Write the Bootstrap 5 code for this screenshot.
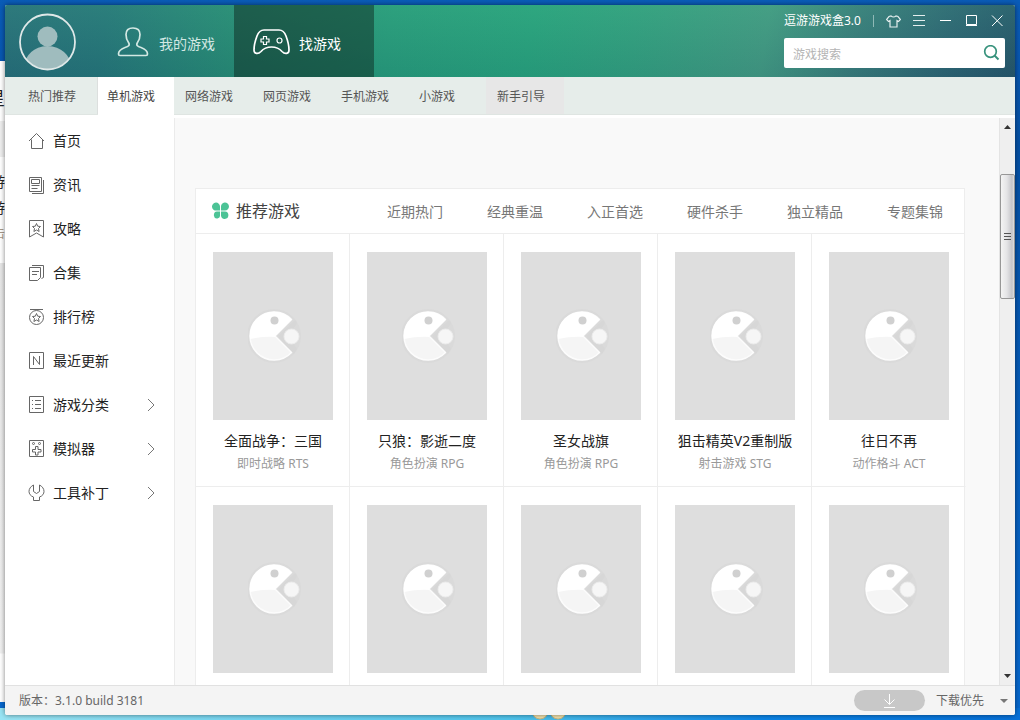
<!DOCTYPE html>
<html lang="zh-CN">
<head>
<meta charset="utf-8">
<meta name="viewport" content="width=device-width, initial-scale=1">
<title>逗游游戏盒3.0</title>
<link href="https://cdn.jsdelivr.net/npm/bootstrap@5.3.0/dist/css/bootstrap.min.css" rel="stylesheet">
<script src="https://cdn.jsdelivr.net/npm/bootstrap@5.3.0/dist/js/bootstrap.bundle.min.js"></script>
<style>
body{font-family:"Noto Sans","Noto Sans CJK SC",sans-serif;font-size:12px;line-height:18px;color:#555;
  background:linear-gradient(90deg,#98e4f4 0,#4fc4ec 50%,#0b84e6 75%,#0670d8 100%) bottom/100% 12px no-repeat,linear-gradient(180deg,#0a5cb8 0,#0550a4 20%,#0668cf 100%)}
a{color:inherit;text-decoration:none}
button{border:0;background:none;padding:0;color:inherit}
svg{display:block;flex:none}
.desk{height:100vh;padding:5px 5px 5px 0}
.behind{width:5px;flex:none;margin-top:56px;margin-bottom:13px;direction:rtl;color:#222;font-size:14px;white-space:nowrap;
  background:linear-gradient(#fff 0,#fff 60px,#eee 60px,#eee 96px,#fff 96px,#fff 202px,#e6e6e6 202px,#f0f0f0 592px,#fff 593px)}
.behind p{margin:0;height:26px}
.behind p:first-child{height:88px;padding-top:28px;font-size:18px}
.behind p:last-child{color:#a98;font-size:12px}
.flower{position:absolute;left:530px;bottom:-4px}
.app{background:#fff;box-shadow:0 0 5px rgba(0,0,0,.5);border-radius:2px;position:relative}
.topbar{height:72px;color:#fff;
  background:linear-gradient(180deg,rgba(70,180,130,.16),rgba(0,60,70,.12)),linear-gradient(98deg,#296e7b 0,#27757b 10%,#298c77 23%,#299d7d 38%,#2aa47f 52%,#34a181 62%,#459b85 75%,#3b7c7d 84%,#2f6475 93%,#28556c 100%)}
.avatar{margin:8px 18px 0 14px}
.maintab{width:140px;padding:2px 0 0 19px;gap:9px;font-size:14px;color:#d3e8e3}
.maintab.active{background:rgba(10,30,25,.45);color:#fff}
.tools{width:231px;padding:5px 5px 0 0}
.tools button{width:26px;height:22px}
.rule{width:1px;height:12px;background:#8fb9b6;margin-right:6px}
.search{height:30px;background:#fff;border-radius:2px;margin:6px 5px 0 0;padding:0 5px 0 9px}
.search input{border:0;outline:0;background:none;min-width:0;color:#555}
.search input::placeholder{color:#b4b4b4}
.subtabs{height:38px;background:#e6edea;border-bottom:1px solid #dfe5e2;margin-bottom:3px}
.subtabs a{width:78px;padding:2px 0 0 11px}
.subtabs a.first{width:93px;padding-left:23px;border-right:1px solid #dcdfde}
.subtabs a.active{width:76px;padding-left:9px;background:#fff;margin-bottom:-1px;color:#444}
.subtabs a.guide{background:#e7e7e7}
.sidebar{width:170px;border-right:1px solid #ebebeb;padding-top:1px;flex:none}
.sidebar a{height:44px;padding:0 19px 0 23px;font-size:14px;color:#222;gap:8px}
.sidebar svg{color:#666}
.content-area{background:#f9f9f9;padding:70px 34px 0 20px}
.panel{background:#fff;border:1px solid #ededed}
.panel-head{height:45px;border-bottom:1px solid #ededed;padding-left:16px}
.panel-head h2{font-size:16px;line-height:24px;color:#444;gap:7px;font-weight:400}
.panel-head nav{padding-top:2px;margin-right:-1px}
.panel-head nav a{width:100px;font-size:14px;color:#777}
.games{display:grid;grid-template-columns:repeat(5,1fr);margin-right:-2px}
.game{border-right:1px solid #ededed;border-bottom:1px solid #ededed;padding:18px 0 0 1px;height:253px}
.game:nth-child(5n){border-right-color:transparent}
.cover{width:120px;height:168px;background:#dedede;padding-left:6px}
.game h3{font-size:14px;line-height:22px;margin:10px 0 0;color:#222;font-weight:400;white-space:nowrap}
.game p{margin:3px 0 0;color:#999}
.scroller{width:16px;background:#efefef;border-left:1px solid #e4e4e4;padding:6px 0}
.track{padding-top:45px}
.thumb{height:125px;width:15px;border:1px solid #979797;border-radius:2px;background:linear-gradient(90deg,#f4f4f4,#e4e4e6 45%,#c4c4c8 85%,#e0e0e0)}
.statusbar{height:30px;background:#f4f4f4;border-top:1px solid #e1e1e1;padding:0 7px 0 14px;color:#666;border-radius:0 0 2px 2px}
.dl{width:71px;height:21px;border-radius:11px;background:#c8c8c8;margin-right:11px}
</style>
</head>
<body>
<svg width="0" height="0" class="position-absolute">
  <symbol id="pac" viewBox="0 0 56 56">
    <circle cx="26" cy="28" r="27" fill="#dadada"/><circle cx="41" cy="28" r="12" fill="#dadada"/>
    <path d="M30 28 47 12q3 3 1 5l-4 5 6 6-5 7 4 6-3 5Z" fill="#d7d7d7"/>
    <path d="M27 28 43.500 11.500A24 24 0 1 0 43.500 44.500Z" fill="#f5f5f5" stroke="#fcfcfc" stroke-width="1.500" stroke-linejoin="round"/>
    <path d="M27 28 43.500 11.500A24 24 0 0 0 2 31Q16 28 28 29Z" fill="#fff"/>
    <circle cx="26.500" cy="12.500" r="4" fill="#d0d0d0"/>
    <circle cx="43.500" cy="28.500" r="7.500" fill="#f6f6f6" stroke="#ececec"/>
  </symbol>
  <symbol id="chev" viewBox="0 0 8 14"><path d="M1 1l6 6-6 6" fill="none" stroke="#777"/></symbol>
</svg>
<div class="desk d-flex position-relative overflow-hidden">
  <div class="behind overflow-hidden" aria-hidden="true"><p>星</p><p class="mt-4">游</p><p>游</p><p>击</p></div>
  <svg class="flower" width="38" height="20"><g fill="#f4e3ad" stroke="#c9b67d"><circle cx="10" cy="7" r="8"/><circle cx="28" cy="7" r="8"/></g></svg>
  <div class="app d-flex flex-column flex-grow-1 overflow-hidden">
    <header class="topbar d-flex flex-shrink-0">
      <svg class="avatar" width="57" height="58" viewBox="0 0 57 58"><defs><clipPath id="ac"><circle cx="28.500" cy="29" r="27"/></clipPath></defs>
        <g clip-path="url(#ac)" fill="#9fbcbe"><circle cx="28.500" cy="23.500" r="10"/><path d="M3 60q3-26 25.500-27Q51 34 55 60Z"/></g>
        <circle cx="28.500" cy="29" r="27.500" fill="none" stroke="#dfe8e8" stroke-width="1.800"/></svg>
      <nav class="d-flex">
        <a href="#" class="maintab d-flex align-items-center"><svg width="37" height="30" viewBox="0 0 37 30" fill="none" stroke="currentColor" stroke-width="1.700"><path d="M20 1c-4.500 0-7 2.500-7 6.500 0 4 1 6 2.500 8 2 3-.5 4-3.500 5-4 1.500-6.500 3-6.500 6.500 0 1.200.5 1.500 1.500 1.500h26c1 0 1.500-.3 1.500-1.500 0-3.500-2.500-5-6.500-6.500-3-1-5.500-2-3.500-5 1.500-2 2.500-4 2.500-8C27 3.500 24.500 1 20 1Z"/></svg><span class="pt-1">我的游戏</span></a>
        <a href="#" class="maintab active d-flex align-items-center"><svg width="37" height="26" viewBox="0 0 37 26" fill="none" stroke="currentColor"><path stroke-width="1.700" d="M11 1h15c4 0 5.500 2 7 6 1.500 4 3 9 3 14 0 4-4 4.500-7 1.500-3-3.500-6-4.500-10.500-4.500S11 19 8 22.500c-3 3-7 2.500-7-1.500 0-5 1.500-10 3-14 1.500-4 3-6 7-6Z"/><path stroke-width="1.200" d="M10.500 7.500h3v2.500h2.500v3h-2.500v2.500h-3v-2.500H8v-3h2.500Z"/><circle cx="26.500" cy="11.500" r="2.500" stroke-width="1.200"/></svg><span class="pt-1">找游戏</span></a>
      </nav>
      <div class="tools ms-auto">
        <div class="d-flex align-items-center">
          <span class="me-auto">逗游游戏盒3.0</span><span class="rule"></span>
          <button type="button" aria-label="皮肤"><svg class="mx-auto" width="15" height="13" viewBox="0 0 15 13" fill="none" stroke="#e4eeee" stroke-width="1.200"><path d="M5 1q2.500 2 5 0l2 .5 2.500 3-2 2-1.500-1V12H4V5.500l-1.500 1-2-2L3 1.500Z"/></svg></button>
          <button type="button" aria-label="菜单"><svg class="mx-auto" width="12" height="12" stroke="#e4eeee"><path d="M0 .5h12M0 5.500h12M0 10.500h12"/></svg></button>
          <button type="button" aria-label="最小化"><svg class="mx-auto" width="12" height="12" stroke="#fff"><path d="M1 5.500h11"/></svg></button>
          <button type="button" aria-label="最大化"><svg class="mx-auto" width="12" height="12" fill="none" stroke="#fff"><path d="M1.500.500h10v9H1.500ZM1 10.500h11"/></svg></button>
          <button type="button" aria-label="关闭"><svg class="mx-auto" width="12" height="12" stroke="#fff"><path d="M1 .5l10.500 10.500M11.500.500L1 11"/></svg></button>
        </div>
        <form class="search d-flex align-items-center">
          <input type="text" class="flex-grow-1 p-0 pt-1" placeholder="游戏搜索" aria-label="游戏搜索">
          <button type="button" aria-label="搜索"><svg class="ms-auto" width="17" height="16" viewBox="0 0 17 16" fill="none" stroke="#37927c" stroke-width="1.700"><circle cx="7.500" cy="6.500" r="5.800"/><path d="M11.500 10.500l4 4" stroke-width="2"/></svg></button>
        </form>
      </div>
    </header>
    <nav class="subtabs d-flex flex-shrink-0">
      <a href="#" class="first d-flex align-items-center">热门推荐</a><a href="#" class="active d-flex align-items-center">单机游戏</a><a href="#" class="d-flex align-items-center">网络游戏</a><a href="#" class="d-flex align-items-center">网页游戏</a><a href="#" class="d-flex align-items-center">手机游戏</a><a href="#" class="d-flex align-items-center">小游戏</a><a href="#" class="guide d-flex align-items-center">新手引导</a>
    </nav>
    <div class="d-flex flex-grow-1 overflow-hidden">
      <nav class="sidebar" id="side"></nav>
      <main class="content-area flex-grow-1 overflow-hidden">
        <section class="panel">
          <div class="panel-head d-flex align-items-center">
            <h2 class="d-flex align-items-center m-0"><svg width="17" height="18" viewBox="0 0 17 18" fill="#4cc396"><path d="M8 8.500H4.500A4 4 0 1 1 8 4.500ZM9 8.500V5a4 4 0 1 1 4 3.500ZM8 9.500V13a3 3 0 0 1-6 1c-.5-2 .5-4.500 3-4.500ZM9 9.500h4a3.700 3.700 0 1 1-4 4Z"/></svg>推荐游戏</h2>
            <nav class="d-flex ms-auto text-center"><a href="#">近期热门</a><a href="#">经典重温</a><a href="#">入正首选</a><a href="#">硬件杀手</a><a href="#">独立精品</a><a href="#">专题集锦</a></nav>
          </div>
          <div class="games" id="games"></div>
        </section>
      </main>
      <div class="scroller d-flex flex-column align-items-center flex-shrink-0">
        <svg width="7" height="5"><path d="M0 5 3.500 1 7 5Z" fill="#333"/></svg>
        <div class="track flex-grow-1"><div class="thumb d-flex align-items-center justify-content-center"><svg width="7" height="9" stroke="#555"><path d="M0 1.500h7M0 4.500h7M0 7.500h7"/></svg></div></div>
        <svg width="7" height="5"><path d="M0 0 3.500 4 7 0Z" fill="#333"/></svg>
      </div>
    </div>
    <footer class="statusbar d-flex align-items-center flex-shrink-0">
      <span class="me-auto">版本：3.1.0 build 3181</span>
      <button type="button" class="dl" aria-label="下载"><svg class="mx-auto" width="13" height="14" fill="none" stroke="#fff"><path d="M6.500 0v10M1.500 5.500l5 5 5-5M1 13.500h11"/></svg></button>
      <button type="button" class="d-flex align-items-center gap-3">下载优先<svg width="8" height="4"><path d="M0 0h8L4 4Z" fill="#777"/></svg></button>
    </footer>
  </div>
</div>
<script>
const star = (x, y) => `<path d="M${x} ${y-4}l1.200 2.700 2.800.300-2 2 .600 3-2.600-1.500-2.600 1.500.600-3-2-2 2.800-.300Z"/>`;
const items = [
  ['首页', '<path d="M1 9 8.500 1.500 16 9M3.500 7.500v9h11v-9"/>'],
  ['资讯', '<path d="M1.500 1.500h12v14h-12ZM3.500 3.500h8v4h-8ZM3.500 9.500h8M3.500 12.500h6M15.500 4v13.500H4"/>'],
  ['攻略', '<path d="M1.500.500h14v16.500l-7-4-7 4Z"/>' + star(8.5, 7.5)],
  ['合集', '<path d="M1.500 3.500h11v10l-3 3h-8ZM4 1.500h11.500v12l-2 1M4 7.500h7M4 10.500h5"/>'],
  ['排行榜', '<circle cx="8.500" cy="9.500" r="7"/><path d="M2 1.500h13"/>' + star(8.5, 9.5)],
  ['最近更新', '<path d="M1.500.500h14v16h-14ZM5.500 13V4.500l6 8V4"/>'],
  ['游戏分类', '<path d="M1.500.500h14v16h-14ZM4 4.500h1M7 4.500h6M4 8.500h1M7 8.500h6M4 12.500h1M7 12.500h6"/>', 1],
  ['模拟器', '<path d="M1.500.500h14v16h-14ZM7.500 6.500h2.500v3h3V12h-3v3H7.500v-3h-3V9.500h3Z"/><circle cx="5.500" cy="3.500" r="1"/><circle cx="11.500" cy="3.500" r="1"/>', 1],
  ['工具补丁', '<path d="M5.500 1C-.500 4-.500 11 5.500 13v3.500h6V13c6-2 6-9 0-12v6.500l-3 2-3-2Z"/>', 1]
];
document.getElementById('side').innerHTML = items.map(([t, p, more]) =>
  `<a href="#" class="d-flex align-items-center"><svg width="17" height="18" viewBox="0 0 17 18" fill="none" stroke="currentColor">${p}</svg>${t}${more ? '<svg class="ms-auto" width="8" height="14"><use href="#chev"/></svg>' : ''}</a>`).join('');
const games = [['全面战争：三国', '即时战略 RTS'], ['只狼：影逝二度', '角色扮演 RPG'], ['圣女战旗', '角色扮演 RPG'], ['狙击精英V2重制版', '射击游戏 STG'], ['往日不再', '动作格斗 ACT'], [], [], [], [], []];
document.getElementById('games').innerHTML = games.map(([t, k]) =>
  `<article class="game text-center"><div class="cover mx-auto d-flex align-items-center justify-content-center"><svg width="56" height="56"><use href="#pac"/></svg></div>${t ? `<h3>${t}</h3><p>${k}</p>` : ''}</article>`).join('');
</script>
</body>
</html>
